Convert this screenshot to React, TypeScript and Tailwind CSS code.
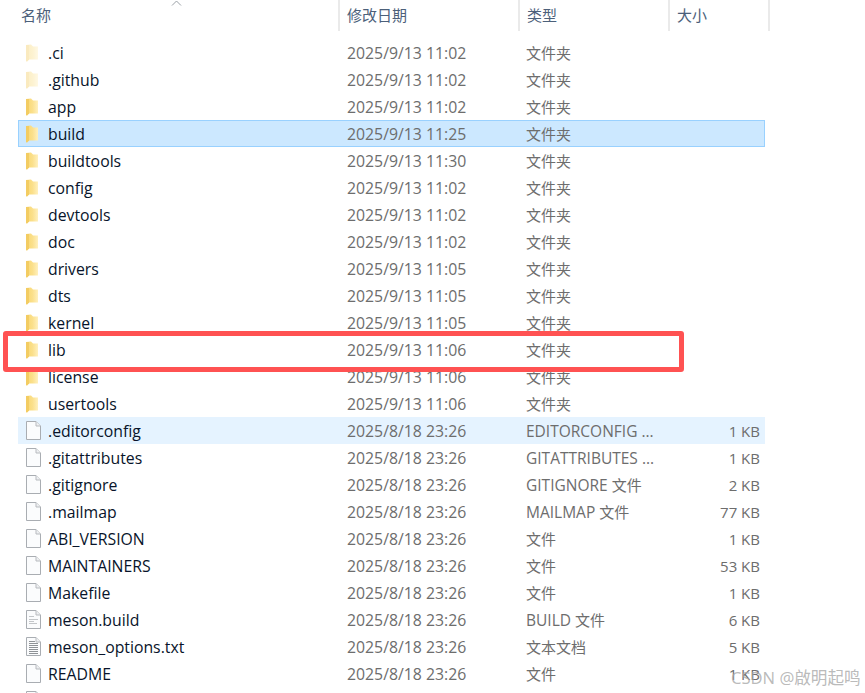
import React from "react";

type Row = {
  name: string;
  date: string;
  type: string;
  size?: string;
  icon: "folder" | "hidden" | "file" | "lines" | "text";
  state?: "selected" | "hover";
};

const rows: Row[] = [
  { name: ".ci", date: "2025/9/13 11:02", type: "文件夹", icon: "hidden" },
  { name: ".github", date: "2025/9/13 11:02", type: "文件夹", icon: "hidden" },
  { name: "app", date: "2025/9/13 11:02", type: "文件夹", icon: "folder" },
  { name: "build", date: "2025/9/13 11:25", type: "文件夹", icon: "folder", state: "selected" },
  { name: "buildtools", date: "2025/9/13 11:30", type: "文件夹", icon: "folder" },
  { name: "config", date: "2025/9/13 11:02", type: "文件夹", icon: "folder" },
  { name: "devtools", date: "2025/9/13 11:02", type: "文件夹", icon: "folder" },
  { name: "doc", date: "2025/9/13 11:02", type: "文件夹", icon: "folder" },
  { name: "drivers", date: "2025/9/13 11:05", type: "文件夹", icon: "folder" },
  { name: "dts", date: "2025/9/13 11:05", type: "文件夹", icon: "folder" },
  { name: "kernel", date: "2025/9/13 11:05", type: "文件夹", icon: "folder" },
  { name: "lib", date: "2025/9/13 11:06", type: "文件夹", icon: "folder" },
  { name: "license", date: "2025/9/13 11:06", type: "文件夹", icon: "folder" },
  { name: "usertools", date: "2025/9/13 11:06", type: "文件夹", icon: "folder" },
  { name: ".editorconfig", date: "2025/8/18 23:26", type: "EDITORCONFIG ...", size: "1 KB", icon: "file", state: "hover" },
  { name: ".gitattributes", date: "2025/8/18 23:26", type: "GITATTRIBUTES ...", size: "1 KB", icon: "file" },
  { name: ".gitignore", date: "2025/8/18 23:26", type: "GITIGNORE 文件", size: "2 KB", icon: "file" },
  { name: ".mailmap", date: "2025/8/18 23:26", type: "MAILMAP 文件", size: "77 KB", icon: "file" },
  { name: "ABI_VERSION", date: "2025/8/18 23:26", type: "文件", size: "1 KB", icon: "file" },
  { name: "MAINTAINERS", date: "2025/8/18 23:26", type: "文件", size: "53 KB", icon: "file" },
  { name: "Makefile", date: "2025/8/18 23:26", type: "文件", size: "1 KB", icon: "file" },
  { name: "meson.build", date: "2025/8/18 23:26", type: "BUILD 文件", size: "6 KB", icon: "lines" },
  { name: "meson_options.txt", date: "2025/8/18 23:26", type: "文本文档", size: "5 KB", icon: "text" },
  { name: "README", date: "2025/8/18 23:26", type: "文件", size: "1 KB", icon: "file" },
  { name: "", date: "", type: "", icon: "file" },
];

function FolderIcon({ faded }: { faded?: boolean }) {
  return (
    <svg width="13" height="18" viewBox="0 0 13 18" className={faded ? "opacity-40" : ""}>
      <defs>
        <linearGradient id="fold" x1="0" y1="0" x2="1" y2="0">
          <stop offset="0" stopColor="#f8d66e" />
          <stop offset="0.55" stopColor="#fbe08c" />
          <stop offset="1" stopColor="#fff0bd" />
        </linearGradient>
      </defs>
      <path d="M0 1 L5 0.5 L7 2.5 L12 2.5 L12 15.5 L3 15.5 L1 17.5 L0 17 Z" fill="url(#fold)" />
      <path d="M0 1 L3 1 L3 15.5 L1 17.5 L0 17 Z" fill="#f3cc62" />
    </svg>
  );
}

function FileIcon({ kind }: { kind: "file" | "lines" | "text" }) {
  return (
    <svg width="15" height="19" viewBox="0 0 15 19">
      <path d="M0.5 0.5 H10 L14.5 5 V18.5 H0.5 Z" fill="#fbfcfd" stroke="#a9adb2" />
      <path d="M10 0.5 V5 H14.5" fill="#eef0f2" stroke="#b8bbbf" />
      {kind === "lines" && (
        <path d="M3 6.5 H8 M3 9.5 H12 M3 11.5 H8 M3 13.5 H11" stroke="#c3c6c9" strokeWidth="1.2" />
      )}
      {kind === "text" && (
        <path d="M3 4.5 H9 M3 6.5 H12 M3 8.5 H12 M3 10.5 H12 M3 12.5 H12 M3 14.5 H12 M3 16.5 H12" stroke="#8e9296" />
      )}
    </svg>
  );
}

function RowIcon({ icon }: { icon: Row["icon"] }) {
  if (icon === "folder") return <FolderIcon />;
  if (icon === "hidden") return <FolderIcon faded />;
  return <FileIcon kind={icon} />;
}

// Chinese runs stay at 15px, latin text is set a little larger to match the widths
function TypeText({ text }: { text: string }) {
  return (
    <>
      {text.split(/([\u4e00-\u9fff]+)/).map((part, i) =>
        i % 2 === 1 ? (
          <span key={i} className="text-[15px]">
            {part}
          </span>
        ) : (
          part
        )
      )}
    </>
  );
}

function HeaderCell({ label, className }: { label: string; className: string }) {
  return (
    <div className={`h-full flex items-start pt-[5px] text-[15px] leading-5 text-[#4c607a] border-r-2 border-[#eaeaea] ${className}`}>
      {label}
    </div>
  );
}

export default function App() {
  return (
    <div
      className="relative h-[693px] w-[865px] overflow-hidden bg-white"
      style={{ fontFamily: '"Open Sans", "Noto Sans CJK SC", sans-serif' }}
    >
      {/* Column header */}
      <div className="flex h-[31px] pl-[21px]">
        <HeaderCell label="名称" className="w-[319px]" />
        <HeaderCell label="修改日期" className="w-[180px] pl-[7px]" />
        <HeaderCell label="类型" className="w-[150px] pl-[7px]" />
        <HeaderCell label="大小" className="w-[100px] pl-[7px]" />
      </div>

      {/* Sort arrow */}
      <svg className="absolute left-[171px] top-0" width="11" height="6" viewBox="0 0 11 6">
        <path d="M1 5.5 L5.5 1 L10 5.5" fill="none" stroke="#9aa0a6" />
      </svg>

      {/* File list */}
      <div className="ml-[18px] mt-[8px] w-[747px] flex flex-col">
        {rows.map((row, i) => (
          <div
            key={i}
            className={`flex items-center h-[27px] shrink-0 text-[15.8px] leading-[27px] border ${
              row.state === "selected"
                ? "bg-[#cce8ff] border-[#99d1ff]"
                : row.state === "hover"
                ? "bg-[#e5f3ff] border-[#e5f3ff]"
                : "border-transparent"
            }`}
          >
            <div className="w-[28px] pl-[7px] flex items-center shrink-0">
              <RowIcon icon={row.icon} />
            </div>
            <div className="w-[299px] pl-[1px] pt-[1px] text-[#08142a] whitespace-nowrap">{row.name}</div>
            <div className="w-[180px] pl-[1px] pt-[1px] text-[#6d6d6d] whitespace-nowrap">{row.date}</div>
            <div className="w-[150px] pt-[1px] text-[15.5px] text-[#6d6d6d] whitespace-nowrap">
              <TypeText text={row.type} />
            </div>
            <div className="w-[84px] pt-[1px] text-right text-[15px] text-[#6d6d6d] whitespace-nowrap">{row.size}</div>
          </div>
        ))}
      </div>

      {/* Red annotation box */}
      <div className="absolute left-[3px] top-[331px] w-[681px] h-[41px] border-[5px] border-[#ff5252] rounded-[3px]" />

      {/* Watermark */}
      <div className="absolute left-[731px] top-[666px] text-[16.6px] leading-6 text-[#a8a8a8]/80 whitespace-nowrap">
        CSDN @啟明起鸣
      </div>
    </div>
  );
}
